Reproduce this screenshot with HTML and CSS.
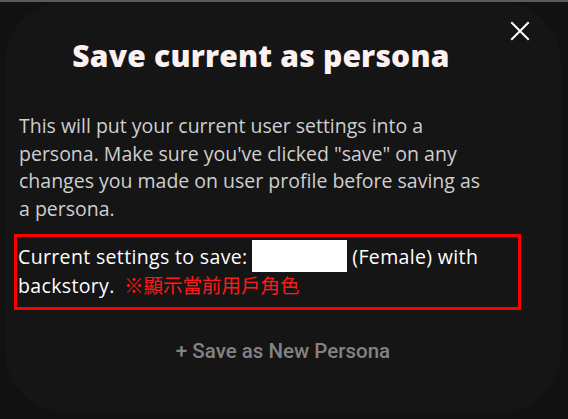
FILE: index.html
```html
<!DOCTYPE html>
<html lang="en">
<head>
    <meta charset="UTF-8">
    <meta name="viewport" content="width=device-width, initial-scale=1.0">
    <title>Save current as persona</title>
    <link rel="stylesheet" href="styles.css">
</head>
<body>
    <div class="topline"></div>
    <div class="modal">
        <button class="close" aria-label="Close">
            <svg width="20" height="20" viewBox="0 0 20 20">
                <path d="M2 2 L18 18 M18 2 L2 18" stroke="#fff" stroke-width="2" stroke-linecap="square"/>
            </svg>
        </button>
        <h1 class="title">Save current as persona</h1>
        <p class="desc">This will put your current user settings into a persona. Make sure you've clicked "save" on any changes you made on user profile before saving as a persona.</p>
        <div class="current">
            <span>Current settings to save:</span> <span class="name"></span> <span>(Female) with</span> <span>backstory.</span> <span class="note">※顯示當前用戶角色</span>
        </div>
        <button class="save">+ Save as New Persona</button>
    </div>
</body>
</html>
```

FILE: styles.css
```css
html, body {
    margin: 0;
    padding: 0;
    height: 100%;
    overflow: hidden;
}

body {
    background: #111112;
    font-family: "Open Sans", "Noto Sans", sans-serif;
    color: #fff;
}

.topline {
    height: 2px;
    background: #5a5a5a;
}

.modal {
    position: relative;
    margin: 0 7px 0 5px;
    height: 410px;
    box-sizing: border-box;
    background: #151515;
    border-radius: 60px;
    padding: 34px 14px 0 14px;
}

.close {
    position: absolute;
    top: 19px;
    right: 31px;
    background: none;
    border: none;
    padding: 0;
    cursor: pointer;
}

.title {
    margin: 0;
    padding-right: 44px;
    text-align: center;
    font-size: 30px;
    font-weight: 800;
    color: #fcf1f1;
    letter-spacing: 0.2px;
    line-height: 40px;
}

.desc {
    margin: 36px 0 0 0;
    width: 475px;
    font-size: 19.5px;
    line-height: 27.5px;
    color: #cfcfcf;
}

.current {
    margin-top: 12px;
    margin-left: -5px;
    width: 499px;
    border: 3px solid #ff0000;
    padding: 6px 1px 7px 1px;
    font-size: 19.5px;
    line-height: 28px;
    letter-spacing: 0.35px;
    color: #fff;
}

.name {
    display: inline-block;
    width: 95px;
    height: 32px;
    margin: -4px 0 -1px -1px;
    background: #fff;
    vertical-align: -7px;
}

.note {
    color: #ff1a1a;
    font-family: "Noto Sans CJK TC", sans-serif;
    font-size: 19.5px;
    letter-spacing: 0;
    margin-left: 4px;
}

.save {
    display: block;
    margin: 28px auto 0 auto;
    background: none;
    border: none;
    font-family: Roboto, sans-serif;
    font-weight: 500;
    font-size: 20.5px;
    color: #838383;
    cursor: pointer;
}
```
